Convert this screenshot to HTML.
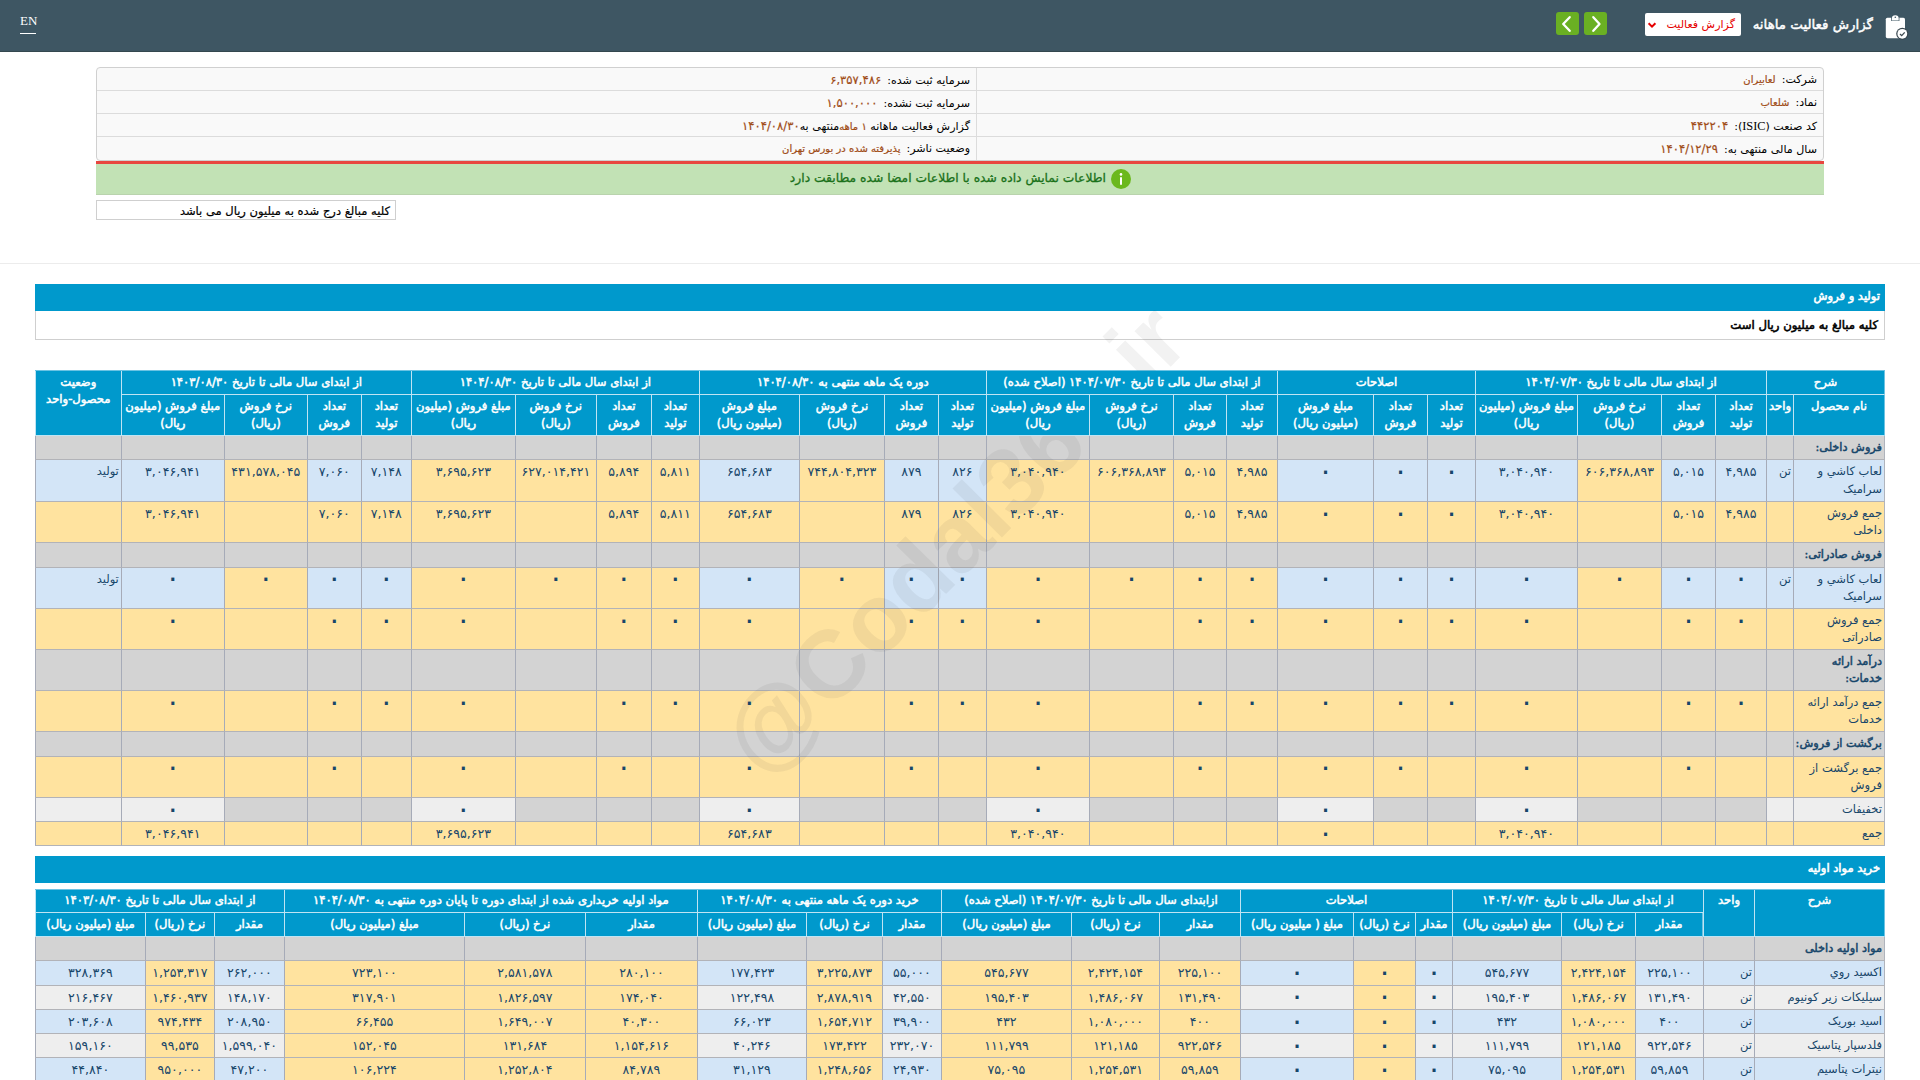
<!DOCTYPE html>
<html lang="fa" dir="rtl">
<head>
<meta charset="utf-8">
<title>گزارش فعالیت ماهانه</title>
<style>
*{box-sizing:border-box}
html,body{margin:0;padding:0}
body{width:1920px;height:1080px;overflow:hidden;background:#fff;position:relative;direction:rtl;
 font-family:"DejaVu Sans","Liberation Sans",sans-serif;font-size:11.5px;color:#000}
.hdr{position:absolute;left:0;top:0;width:1920px;height:52px;background:#3e5663;border-bottom:1px solid #34484f}
.en{position:absolute;left:20px;top:12px;width:16px;height:22px;color:#fff;font-family:"Liberation Serif",serif;font-size:13px;line-height:18px;border-bottom:1.5px solid #fff;direction:ltr;text-align:center}
.ico{position:absolute;left:1884px;top:13px;width:26px;height:28px}
.ttl{position:absolute;right:47px;top:12px;height:26px;line-height:26px;color:#fff;font-size:13.4px;white-space:nowrap;-webkit-text-stroke:0.45px #fff}
.sel{position:absolute;left:1645px;top:13px;width:96px;height:23px;background:#fff;border-radius:2px;color:#e60000;font-size:11.1px;line-height:23px;padding-right:6px;white-space:nowrap}
.sel svg{position:absolute;left:0;top:0}
.nb{position:absolute;top:12px;width:23px;height:23px;border-radius:3px;background:#6ab023}
.nb svg{position:absolute;left:0;top:0}
.info{position:absolute;left:96px;top:67px;width:1728px;height:94px;background:#f9f9f9;border:1px solid #d0d0d0;border-radius:4px}
.info .r{position:absolute;left:0;width:1726px;height:23px;border-bottom:1px solid #dcdcdc;line-height:22px;font-size:11.1px}
.info .r:last-child{border-bottom:none}
.info .c{position:absolute;top:0;height:100%;white-space:nowrap;padding-right:6px;padding-top:1px}
.info .c1{right:0;width:846px}
.info .c2{right:846px;width:880px;border-right:1px solid #dcdcdc}
.info .v{color:#a04c17;margin-right:6px;font-size:10px;-webkit-text-stroke:0.2px #a04c17}
.info .dt{letter-spacing:-0.55px}
.info .vn{font-size:11.6px}
.info .lat{font-family:"Liberation Serif",serif;font-size:12.3px}
.red{position:absolute;left:96px;top:161px;width:1728px;height:3px;background:#e8463f}
.ok{position:absolute;left:96px;top:164px;width:1728px;height:30.5px;background:#c2e2b5;border-bottom:1px solid #b9d3ad}
.ok .tx{position:absolute;right:718px;top:0;line-height:29px;color:#1a711a;font-size:12.3px;white-space:nowrap;-webkit-text-stroke:0.3px #1a711a}
.ok .ic{position:absolute;left:1015px;top:5px;width:20px;height:20px;border-radius:50%;background:#6bb81d}
.note{position:absolute;left:96px;top:200px;width:300px;height:20px;border:1px solid #cfcfcf;line-height:20px;padding-right:5px;font-size:11.5px;white-space:nowrap;-webkit-text-stroke:0.2px #000}
.hr{position:absolute;left:0;top:263px;width:1920px;height:1px;background:#ececec}
.sec{position:absolute;left:35px;width:1850px;height:26.5px;background:#0099cc;color:#fff;-webkit-text-stroke:0.6px #fff;font-size:11.5px;line-height:25px;padding-right:5px}
.subsec{position:absolute;left:35px;top:310.5px;width:1850px;height:29.5px;border:1px solid #cfcfcf;border-top:none;-webkit-text-stroke:0.55px #000;font-size:11.7px;line-height:28px;padding-right:6px}
.tw{position:absolute;left:35px;width:1850px}
table.rt{border-collapse:separate;border-spacing:0;table-layout:fixed;width:1850px;direction:rtl;border-top:1px solid #6cc3e3;color:#17466a}
table.rt th{background:#0099cc;color:#fff;font-weight:normal;-webkit-text-stroke:0.5px #fff;white-space:nowrap;font-size:11.6px;line-height:17.2px;vertical-align:top;text-align:center;padding:2.6px 1px 0 1px;border-left:1px solid #bfe4f3;border-bottom:1px solid #bfe4f3;overflow:hidden;position:relative;z-index:2}
table.rt tr.h1{height:23.9px}
table.rt tr.h2{height:40.5px}
#t2 tr.h2{height:23.5px}
table.rt td{white-space:nowrap;font-size:12.6px;line-height:17.2px;vertical-align:top;text-align:center;padding:3px 2px 0 2px;border-left:1px solid #a6abb8;border-bottom:1px solid #b2b3b8;overflow:hidden}
table.rt td.nm,table.rt td.un,table.rt td.st{text-align:right;padding-right:2px;font-size:11.5px}
table.rt td:first-child{border-right:1px solid #b0b4bc}
table.rt th:first-child{border-right:1px solid #6cc3e3}
table.rt tr.grp td.nm{font-weight:normal;-webkit-text-stroke:0.5px #17466a;font-size:11.3px}
.g{background:#d3d3d3}.y{background:#ffe39f}.b{background:#d3e5f7}.e{background:#eeeeee}
.wm{position:absolute;left:624.4px;top:483.5px;width:660px;height:110px;line-height:110px;text-align:center;direction:ltr;font-family:"Liberation Sans",sans-serif;font-weight:bold;font-size:96px;color:rgba(60,60,60,0.065);z-index:1;transform:rotate(-45.35deg);white-space:nowrap;pointer-events:none}
table.rt td.z{font-size:28px;padding-top:1.7px;line-height:17px}

</style>
</head>
<body>
<div class="hdr">
 <div class="en">EN</div>
 <svg class="ico" viewBox="0 0 26 28"><rect x="1.8" y="4.7" width="19.2" height="20.5" rx="1.6" fill="#fff"/><path d="M7.2 8V5.3a4.1 3.6 0 0 1 8.2 0V8z" fill="#3e5663"/><path d="M7.9 7.4V5.4a3.4 3.1 0 0 1 6.8 0v2z" fill="#fff"/><circle cx="11.3" cy="4.3" r="0.8" fill="#3e5663"/><circle cx="18.3" cy="20.8" r="6.1" fill="#3a4850"/><circle cx="18.3" cy="20.8" r="4.9" fill="#fff"/><path d="M16 21l1.7 1.6 3-3.2" fill="none" stroke="#3e4a50" stroke-width="1.3"/></svg>
 <div class="ttl">گزارش فعالیت ماهانه</div>
 <div class="sel">گزارش فعالیت<svg width="14" height="18" viewBox="0 0 14 18"><path d="M3.6 10.2L7 13.6 10.4 10.2" fill="none" stroke="#e60000" stroke-width="2"/></svg></div>
 <div class="nb" style="left:1584px"><svg width="23" height="23" viewBox="0 0 23 23"><path d="M9.3 5.2L15.5 12 9.3 18.8" fill="none" stroke="#fff" stroke-width="2.3" stroke-linecap="round" stroke-linejoin="round"/></svg></div>
 <div class="nb" style="left:1556px"><svg width="23" height="23" viewBox="0 0 23 23"><path d="M13.7 5.2L7.2 12l6.5 6.8" fill="none" stroke="#fff" stroke-width="2.3" stroke-linecap="round" stroke-linejoin="round"/></svg></div>
</div>
<div class="info">
 <div class="r" style="top:0"><div class="c c1">شرکت:<span class="v">لعابیران</span></div><div class="c c2">سرمایه ثبت شده:<span class="v vn">۶,۳۵۷,۴۸۶</span></div></div>
 <div class="r" style="top:23px"><div class="c c1">نماد:<span class="v">شلعاب</span></div><div class="c c2">سرمایه ثبت نشده:<span class="v vn">۱,۵۰۰,۰۰۰</span></div></div>
 <div class="r" style="top:46px"><div class="c c1">کد صنعت (<span class="lat">ISIC</span>):<span class="v vn">۴۴۲۲۰۴</span></div><div class="c c2">گزارش فعالیت ماهانه <span class="v" style="margin:0">۱ ماهه</span>&zwnj;منتهی به<span class="v vn dt" style="margin:0">۱۴۰۴/۰۸/۳۰</span></div></div>
 <div class="r" style="top:69px"><div class="c c1">سال مالی منتهی به:<span class="v vn dt">۱۴۰۴/۱۲/۲۹</span></div><div class="c c2">وضعیت ناشر:<span class="v">پذیرفته شده در بورس تهران</span></div></div>
</div>
<div class="red"></div>
<div class="ok"><div class="tx">اطلاعات نمایش داده شده با اطلاعات امضا شده مطابقت دارد</div><div class="ic"><svg width="20" height="20" viewBox="0 0 20 20"><circle cx="10" cy="5.4" r="1.3" fill="#fff"/><rect x="9" y="8" width="2" height="8" rx="1" fill="#fff"/></svg></div></div>
<div class="note">کلیه مبالغ درج شده به میلیون ریال می باشد</div>
<div class="hr"></div>

<div class="sec" style="top:284.2px">تولید و فروش</div>
<div class="subsec">کلیه مبالغ به میلیون ریال است</div>
<div class="tw" style="top:370.4px"><table class="rt" id="t1"><colgroup><col style="width:92px"><col style="width:27px"><col style="width:51px"><col style="width:54px"><col style="width:84px"><col style="width:102px"><col style="width:48px"><col style="width:54px"><col style="width:96px"><col style="width:51px"><col style="width:53px"><col style="width:84px"><col style="width:103px"><col style="width:48px"><col style="width:54px"><col style="width:85px"><col style="width:100px"><col style="width:48px"><col style="width:55px"><col style="width:81px"><col style="width:104px"><col style="width:50px"><col style="width:54px"><col style="width:83px"><col style="width:103px"><col style="width:86px"></colgroup><thead><tr class="h1"><th colspan="2">شرح</th><th colspan="4">از ابتدای سال مالی تا تاریخ ۱۴۰۴/۰۷/۳۰</th><th colspan="3">اصلاحات</th><th colspan="4">از ابتدای سال مالی تا تاریخ ۱۴۰۴/۰۷/۳۰ (اصلاح شده)</th><th colspan="4">دوره یک ماهه منتهی به ۱۴۰۴/۰۸/۳۰</th><th colspan="4">از ابتدای سال مالی تا تاریخ ۱۴۰۴/۰۸/۳۰</th><th colspan="4">از ابتدای سال مالی تا تاریخ ۱۴۰۳/۰۸/۳۰</th><th rowspan="2">وضعیت<br>محصول-واحد</th></tr><tr class="h2"><th>نام محصول</th><th>واحد</th><th>تعداد<br>تولید</th><th>تعداد<br>فروش</th><th>نرخ فروش<br>(ریال)</th><th>مبلغ فروش (میلیون<br>ریال)</th><th>تعداد<br>تولید</th><th>تعداد<br>فروش</th><th>مبلغ فروش<br>(میلیون ریال)</th><th>تعداد<br>تولید</th><th>تعداد<br>فروش</th><th>نرخ فروش<br>(ریال)</th><th>مبلغ فروش (میلیون<br>ریال)</th><th>تعداد<br>تولید</th><th>تعداد<br>فروش</th><th>نرخ فروش<br>(ریال)</th><th>مبلغ فروش<br>(میلیون ریال)</th><th>تعداد<br>تولید</th><th>تعداد<br>فروش</th><th>نرخ فروش<br>(ریال)</th><th>مبلغ فروش (میلیون<br>ریال)</th><th>تعداد<br>تولید</th><th>تعداد<br>فروش</th><th>نرخ فروش<br>(ریال)</th><th>مبلغ فروش (میلیون<br>ریال)</th></tr></thead><tbody><tr class="grp" style="height:24.7px"><td class="nm g ">فروش داخلی:</td><td class="un g"></td><td class="g"></td><td class="g"></td><td class="g"></td><td class="g"></td><td class="g"></td><td class="g"></td><td class="g"></td><td class="g"></td><td class="g"></td><td class="g"></td><td class="g"></td><td class="g"></td><td class="g"></td><td class="g"></td><td class="g"></td><td class="g"></td><td class="g"></td><td class="g"></td><td class="g"></td><td class="g"></td><td class="g"></td><td class="g"></td><td class="g"></td><td class="st g"></td></tr><tr class="" style="height:41.7px"><td class="nm b ">لعاب کاشي و<br>سرامیک</td><td class="un b">تن</td><td class="b">۴,۹۸۵</td><td class="b">۵,۰۱۵</td><td class="y">۶۰۶,۳۶۸,۸۹۳</td><td class="b">۳,۰۴۰,۹۴۰</td><td class="b z">۰</td><td class="b z">۰</td><td class="b z">۰</td><td class="y">۴,۹۸۵</td><td class="y">۵,۰۱۵</td><td class="y">۶۰۶,۳۶۸,۸۹۳</td><td class="y">۳,۰۴۰,۹۴۰</td><td class="b">۸۲۶</td><td class="b">۸۷۹</td><td class="y">۷۴۴,۸۰۴,۳۲۳</td><td class="b">۶۵۴,۶۸۳</td><td class="y">۵,۸۱۱</td><td class="y">۵,۸۹۴</td><td class="y">۶۲۷,۰۱۴,۴۲۱</td><td class="y">۳,۶۹۵,۶۲۳</td><td class="b">۷,۱۴۸</td><td class="b">۷,۰۶۰</td><td class="y">۴۳۱,۵۷۸,۰۴۵</td><td class="b">۳,۰۴۶,۹۴۱</td><td class="st b">تولید</td></tr><tr class="" style="height:41.2px"><td class="nm y ">جمع فروش<br>داخلی</td><td class="un y"></td><td class="y">۴,۹۸۵</td><td class="y">۵,۰۱۵</td><td class="y"></td><td class="y">۳,۰۴۰,۹۴۰</td><td class="y z">۰</td><td class="y z">۰</td><td class="y z">۰</td><td class="y">۴,۹۸۵</td><td class="y">۵,۰۱۵</td><td class="y"></td><td class="y">۳,۰۴۰,۹۴۰</td><td class="y">۸۲۶</td><td class="y">۸۷۹</td><td class="y"></td><td class="y">۶۵۴,۶۸۳</td><td class="y">۵,۸۱۱</td><td class="y">۵,۸۹۴</td><td class="y"></td><td class="y">۳,۶۹۵,۶۲۳</td><td class="y">۷,۱۴۸</td><td class="y">۷,۰۶۰</td><td class="y"></td><td class="y">۳,۰۴۶,۹۴۱</td><td class="st y"></td></tr><tr class="grp" style="height:24.3px"><td class="nm g ">فروش صادراتی:</td><td class="un g"></td><td class="g"></td><td class="g"></td><td class="g"></td><td class="g"></td><td class="g"></td><td class="g"></td><td class="g"></td><td class="g"></td><td class="g"></td><td class="g"></td><td class="g"></td><td class="g"></td><td class="g"></td><td class="g"></td><td class="g"></td><td class="g"></td><td class="g"></td><td class="g"></td><td class="g"></td><td class="g"></td><td class="g"></td><td class="g"></td><td class="g"></td><td class="st g"></td></tr><tr class="" style="height:41.4px"><td class="nm b ">لعاب کاشي و<br>سرامیک</td><td class="un b">تن</td><td class="b z">۰</td><td class="b z">۰</td><td class="y z">۰</td><td class="b z">۰</td><td class="b z">۰</td><td class="b z">۰</td><td class="b z">۰</td><td class="y z">۰</td><td class="y z">۰</td><td class="y z">۰</td><td class="y z">۰</td><td class="b z">۰</td><td class="b z">۰</td><td class="y z">۰</td><td class="b z">۰</td><td class="y z">۰</td><td class="y z">۰</td><td class="y z">۰</td><td class="y z">۰</td><td class="b z">۰</td><td class="b z">۰</td><td class="y z">۰</td><td class="b z">۰</td><td class="st b">تولید</td></tr><tr class="" style="height:41.0px"><td class="nm y ">جمع فروش<br>صادراتی</td><td class="un y"></td><td class="y z">۰</td><td class="y z">۰</td><td class="y"></td><td class="y z">۰</td><td class="y z">۰</td><td class="y z">۰</td><td class="y z">۰</td><td class="y z">۰</td><td class="y z">۰</td><td class="y"></td><td class="y z">۰</td><td class="y z">۰</td><td class="y z">۰</td><td class="y"></td><td class="y z">۰</td><td class="y z">۰</td><td class="y z">۰</td><td class="y"></td><td class="y z">۰</td><td class="y z">۰</td><td class="y z">۰</td><td class="y"></td><td class="y z">۰</td><td class="st y"></td></tr><tr class="grp" style="height:41.2px"><td class="nm g ">درآمد ارائه<br>خدمات:</td><td class="un g"></td><td class="g"></td><td class="g"></td><td class="g"></td><td class="g"></td><td class="g"></td><td class="g"></td><td class="g"></td><td class="g"></td><td class="g"></td><td class="g"></td><td class="g"></td><td class="g"></td><td class="g"></td><td class="g"></td><td class="g"></td><td class="g"></td><td class="g"></td><td class="g"></td><td class="g"></td><td class="g"></td><td class="g"></td><td class="g"></td><td class="g"></td><td class="st g"></td></tr><tr class="" style="height:41.2px"><td class="nm y ">جمع درآمد ارائه<br>خدمات</td><td class="un y"></td><td class="y z">۰</td><td class="y z">۰</td><td class="y"></td><td class="y z">۰</td><td class="y z">۰</td><td class="y z">۰</td><td class="y z">۰</td><td class="y z">۰</td><td class="y z">۰</td><td class="y"></td><td class="y z">۰</td><td class="y z">۰</td><td class="y z">۰</td><td class="y"></td><td class="y z">۰</td><td class="y z">۰</td><td class="y z">۰</td><td class="y"></td><td class="y z">۰</td><td class="y z">۰</td><td class="y z">۰</td><td class="y"></td><td class="y z">۰</td><td class="st y"></td></tr><tr class="grp" style="height:24.1px"><td class="nm g ">برگشت از فروش:</td><td class="un g"></td><td class="g"></td><td class="g"></td><td class="g"></td><td class="g"></td><td class="g"></td><td class="g"></td><td class="g"></td><td class="g"></td><td class="g"></td><td class="g"></td><td class="g"></td><td class="g"></td><td class="g"></td><td class="g"></td><td class="g"></td><td class="g"></td><td class="g"></td><td class="g"></td><td class="g"></td><td class="g"></td><td class="g"></td><td class="g"></td><td class="g"></td><td class="st g"></td></tr><tr class="" style="height:41.4px"><td class="nm y ">جمع برگشت از<br>فروش</td><td class="un y"></td><td class="y"></td><td class="y z">۰</td><td class="y"></td><td class="y z">۰</td><td class="y"></td><td class="y z">۰</td><td class="y z">۰</td><td class="y"></td><td class="y z">۰</td><td class="y"></td><td class="y z">۰</td><td class="y"></td><td class="y z">۰</td><td class="y"></td><td class="y z">۰</td><td class="y"></td><td class="y z">۰</td><td class="y"></td><td class="y z">۰</td><td class="y"></td><td class="y z">۰</td><td class="y"></td><td class="y z">۰</td><td class="st y"></td></tr><tr class="" style="height:24px"><td class="nm e ">تخفیفات</td><td class="un e"></td><td class="g"></td><td class="g"></td><td class="g"></td><td class="e z">۰</td><td class="g"></td><td class="g"></td><td class="e z">۰</td><td class="g"></td><td class="g"></td><td class="g"></td><td class="e z">۰</td><td class="g"></td><td class="g"></td><td class="g"></td><td class="e z">۰</td><td class="g"></td><td class="g"></td><td class="g"></td><td class="e z">۰</td><td class="g"></td><td class="g"></td><td class="g"></td><td class="e z">۰</td><td class="st e"></td></tr><tr class="" style="height:24px"><td class="nm y ">جمع</td><td class="un y"></td><td class="y"></td><td class="y"></td><td class="y"></td><td class="y">۳,۰۴۰,۹۴۰</td><td class="y"></td><td class="y"></td><td class="y z">۰</td><td class="y"></td><td class="y"></td><td class="y"></td><td class="y">۳,۰۴۰,۹۴۰</td><td class="y"></td><td class="y"></td><td class="y"></td><td class="y">۶۵۴,۶۸۳</td><td class="y"></td><td class="y"></td><td class="y"></td><td class="y">۳,۶۹۵,۶۲۳</td><td class="y"></td><td class="y"></td><td class="y"></td><td class="y">۳,۰۴۶,۹۴۱</td><td class="st y"></td></tr></tbody></table></div>
<div class="sec" style="top:856.2px">خرید مواد اولیه</div>
<div class="tw" style="top:888.5px"><table class="rt" id="t2"><colgroup><col style="width:131px"><col style="width:51px"><col style="width:68px"><col style="width:74px"><col style="width:109px"><col style="width:37px"><col style="width:62px"><col style="width:113px"><col style="width:81px"><col style="width:88px"><col style="width:130px"><col style="width:59px"><col style="width:76px"><col style="width:109px"><col style="width:112px"><col style="width:121px"><col style="width:180px"><col style="width:70px"><col style="width:69px"><col style="width:110px"></colgroup><thead><tr class="h1"><th rowspan="2">شرح</th><th rowspan="2">واحد</th><th colspan="3">از ابتدای سال مالی تا تاریخ ۱۴۰۴/۰۷/۳۰</th><th colspan="3">اصلاحات</th><th colspan="3">ازابتدای سال مالی تا تاریخ ۱۴۰۴/۰۷/۳۰ (اصلاح شده)</th><th colspan="3">خرید دوره یک ماهه منتهی به ۱۴۰۴/۰۸/۳۰</th><th colspan="3">مواد اولیه خریداری شده از ابتدای دوره تا پایان دوره منتهی به ۱۴۰۴/۰۸/۳۰</th><th colspan="3">از ابتدای سال مالی تا تاریخ ۱۴۰۳/۰۸/۳۰</th></tr><tr class="h2"><th>مقدار</th><th>نرخ (ریال)</th><th>مبلغ (میلیون ریال)</th><th>مقدار</th><th>نرخ (ریال)</th><th>مبلغ ( میلیون ریال)</th><th>مقدار</th><th>نرخ (ریال)</th><th>مبلغ (میلیون ریال)</th><th>مقدار</th><th>نرخ (ریال)</th><th>مبلغ (میلیون ریال)</th><th>مقدار</th><th>نرخ (ریال)</th><th>مبلغ (میلیون ریال)</th><th>مقدار</th><th>نرخ (ریال)</th><th>مبلغ (میلیون ریال)</th></tr></thead><tbody><tr class="grp" style="height:24.5px"><td class="nm g">مواد اولیه داخلی</td><td class="g"></td><td class="g"></td><td class="g"></td><td class="g"></td><td class="g"></td><td class="g"></td><td class="g"></td><td class="g"></td><td class="g"></td><td class="g"></td><td class="g"></td><td class="g"></td><td class="g"></td><td class="g"></td><td class="g"></td><td class="g"></td><td class="g"></td><td class="g"></td><td class="g"></td></tr><tr style="height:24.25px"><td class="nm b">اکسید روي</td><td class="un b">تن</td><td class="b">۲۲۵,۱۰۰</td><td class="y">۲,۴۲۴,۱۵۴</td><td class="b">۵۴۵,۶۷۷</td><td class="b z">۰</td><td class="y z">۰</td><td class="b z">۰</td><td class="y">۲۲۵,۱۰۰</td><td class="y">۲,۴۲۴,۱۵۴</td><td class="y">۵۴۵,۶۷۷</td><td class="b">۵۵,۰۰۰</td><td class="y">۳,۲۲۵,۸۷۳</td><td class="b">۱۷۷,۴۲۳</td><td class="y">۲۸۰,۱۰۰</td><td class="y">۲,۵۸۱,۵۷۸</td><td class="y">۷۲۳,۱۰۰</td><td class="b">۲۶۲,۰۰۰</td><td class="y">۱,۲۵۳,۳۱۷</td><td class="b">۳۲۸,۳۶۹</td></tr><tr style="height:24.25px"><td class="nm e">سیلیکات زیر کونیوم</td><td class="un e">تن</td><td class="e">۱۳۱,۴۹۰</td><td class="y">۱,۴۸۶,۰۶۷</td><td class="e">۱۹۵,۴۰۳</td><td class="e z">۰</td><td class="y z">۰</td><td class="e z">۰</td><td class="y">۱۳۱,۴۹۰</td><td class="y">۱,۴۸۶,۰۶۷</td><td class="y">۱۹۵,۴۰۳</td><td class="e">۴۲,۵۵۰</td><td class="y">۲,۸۷۸,۹۱۹</td><td class="e">۱۲۲,۴۹۸</td><td class="y">۱۷۴,۰۴۰</td><td class="y">۱,۸۲۶,۵۹۷</td><td class="y">۳۱۷,۹۰۱</td><td class="e">۱۴۸,۱۷۰</td><td class="y">۱,۴۶۰,۹۳۷</td><td class="e">۲۱۶,۴۶۷</td></tr><tr style="height:24.25px"><td class="nm b">اسید بوریک</td><td class="un b">تن</td><td class="b">۴۰۰</td><td class="y">۱,۰۸۰,۰۰۰</td><td class="b">۴۳۲</td><td class="b z">۰</td><td class="y z">۰</td><td class="b z">۰</td><td class="y">۴۰۰</td><td class="y">۱,۰۸۰,۰۰۰</td><td class="y">۴۳۲</td><td class="b">۳۹,۹۰۰</td><td class="y">۱,۶۵۴,۷۱۲</td><td class="b">۶۶,۰۲۳</td><td class="y">۴۰,۳۰۰</td><td class="y">۱,۶۴۹,۰۰۷</td><td class="y">۶۶,۴۵۵</td><td class="b">۲۰۸,۹۵۰</td><td class="y">۹۷۴,۴۳۴</td><td class="b">۲۰۳,۶۰۸</td></tr><tr style="height:24.25px"><td class="nm e">فلدسپار پتاسیک</td><td class="un e">تن</td><td class="e">۹۲۲,۵۴۶</td><td class="y">۱۲۱,۱۸۵</td><td class="e">۱۱۱,۷۹۹</td><td class="e z">۰</td><td class="y z">۰</td><td class="e z">۰</td><td class="y">۹۲۲,۵۴۶</td><td class="y">۱۲۱,۱۸۵</td><td class="y">۱۱۱,۷۹۹</td><td class="e">۲۳۲,۰۷۰</td><td class="y">۱۷۳,۴۲۲</td><td class="e">۴۰,۲۴۶</td><td class="y">۱,۱۵۴,۶۱۶</td><td class="y">۱۳۱,۶۸۴</td><td class="y">۱۵۲,۰۴۵</td><td class="e">۱,۵۹۹,۰۴۰</td><td class="y">۹۹,۵۳۵</td><td class="e">۱۵۹,۱۶۰</td></tr><tr style="height:24.25px"><td class="nm b">نیترات پتاسیم</td><td class="un b">تن</td><td class="b">۵۹,۸۵۹</td><td class="y">۱,۲۵۴,۵۳۱</td><td class="b">۷۵,۰۹۵</td><td class="b z">۰</td><td class="y z">۰</td><td class="b z">۰</td><td class="y">۵۹,۸۵۹</td><td class="y">۱,۲۵۴,۵۳۱</td><td class="y">۷۵,۰۹۵</td><td class="b">۲۴,۹۳۰</td><td class="y">۱,۲۴۸,۶۵۶</td><td class="b">۳۱,۱۲۹</td><td class="y">۸۴,۷۸۹</td><td class="y">۱,۲۵۲,۸۰۴</td><td class="y">۱۰۶,۲۲۴</td><td class="b">۴۷,۲۰۰</td><td class="y">۹۵۰,۰۰۰</td><td class="b">۴۴,۸۴۰</td></tr></tbody></table></div>
<div class="wm">@Codal360.ir</div>
</body>
</html>
